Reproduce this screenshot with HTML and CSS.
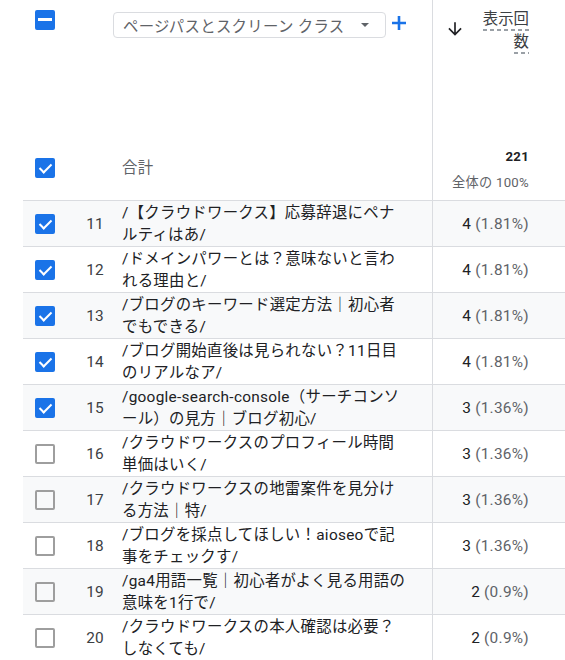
FILE: index.html
```html
<!DOCTYPE html>
<html lang="ja">

<head>
    <meta charset="utf-8">
    <link rel="stylesheet" href="styles.css">
</head>

<body>
    <div class="report">

        <div class="head">
            <div class="head-main">
                <span class="cb some"></span>
                <div class="picker">
                    <span class="picker-label">ページパスとスクリーン クラス</span>
                    <span class="caret"></span>
                </div>
                <svg class="add" width="24" height="24" viewBox="0 0 24 24">
                    <path d="M12 5v14M5 12h14" />
                </svg>
            </div>
            <div class="head-metric">
                <svg class="sort" width="20" height="20" viewBox="0 0 24 24">
                    <path d="M20 12l-1.41-1.41L13 16.17V4h-2v12.17l-5.58-5.59L4 12l8 8 8-8z" />
                </svg>
                <div class="metric-title"><span class="dashed">表示回</span><br><span class="dashed">数</span></div>
            </div>
        </div>

        <div class="row total">
            <div class="c-check"><span class="cb on"></span></div>
            <div class="c-num"></div>
            <div class="c-dim total-label">合計</div>
            <div class="c-val">
                <div class="sum">221</div>
                <div class="share">全体の 100%</div>
            </div>
        </div>

        <div class="row odd">
            <div class="c-check"><span class="cb on"></span></div>
            <div class="c-num">11</div>
            <div class="c-dim">/【クラウドワークス】応募辞退にペナ<br>ルティはあ/</div>
            <div class="c-val">4 <span class="pct">(1.81%)</span></div>
        </div>
        <div class="row">
            <div class="c-check"><span class="cb on"></span></div>
            <div class="c-num">12</div>
            <div class="c-dim">/ドメインパワーとは？意味ないと言わ<br>れる理由と/</div>
            <div class="c-val">4 <span class="pct">(1.81%)</span></div>
        </div>
        <div class="row odd">
            <div class="c-check"><span class="cb on"></span></div>
            <div class="c-num">13</div>
            <div class="c-dim">/ブログのキーワード選定方法｜初心者<br>でもできる/</div>
            <div class="c-val">4 <span class="pct">(1.81%)</span></div>
        </div>
        <div class="row">
            <div class="c-check"><span class="cb on"></span></div>
            <div class="c-num">14</div>
            <div class="c-dim">/ブログ開始直後は見られない？11日目<br>のリアルなア/</div>
            <div class="c-val">4 <span class="pct">(1.81%)</span></div>
        </div>
        <div class="row odd">
            <div class="c-check"><span class="cb on"></span></div>
            <div class="c-num">15</div>
            <div class="c-dim">/google-search-console（サーチコンソ<br>ール）の見方｜ブログ初心/</div>
            <div class="c-val">3 <span class="pct">(1.36%)</span></div>
        </div>
        <div class="row">
            <div class="c-check"><span class="cb"></span></div>
            <div class="c-num">16</div>
            <div class="c-dim">/クラウドワークスのプロフィール時間<br>単価はいく/</div>
            <div class="c-val">3 <span class="pct">(1.36%)</span></div>
        </div>
        <div class="row odd">
            <div class="c-check"><span class="cb"></span></div>
            <div class="c-num">17</div>
            <div class="c-dim">/クラウドワークスの地雷案件を見分け<br>る方法｜特/</div>
            <div class="c-val">3 <span class="pct">(1.36%)</span></div>
        </div>
        <div class="row">
            <div class="c-check"><span class="cb"></span></div>
            <div class="c-num">18</div>
            <div class="c-dim">/ブログを採点してほしい！aioseoで記<br>事をチェックす/</div>
            <div class="c-val">3 <span class="pct">(1.36%)</span></div>
        </div>
        <div class="row odd">
            <div class="c-check"><span class="cb"></span></div>
            <div class="c-num">19</div>
            <div class="c-dim">/ga4用語一覧｜初心者がよく見る用語の<br>意味を1行で/</div>
            <div class="c-val">2 <span class="pct">(0.9%)</span></div>
        </div>
        <div class="row">
            <div class="c-check"><span class="cb"></span></div>
            <div class="c-num">20</div>
            <div class="c-dim">/クラウドワークスの本人確認は必要？<br>しなくても/</div>
            <div class="c-val">2 <span class="pct">(0.9%)</span></div>
        </div>

    </div>
</body>

</html>
```

FILE: styles.css
```css
html,
body {
    margin: 0;
    padding: 0;
    background: #fff;
    overflow: hidden;
}

body {
    font-family: Roboto, "Noto Sans CJK JP", sans-serif;
    font-size: 15.4px;
    letter-spacing: 0.28px;
    color: #202124;
}

.report {
    margin-left: 23px;
    width: 542px;
}

/* header: dimension picker on the left, metric title on the right */
.head {
    display: grid;
    grid-template-columns: 1fr 133px;
    height: 146px;
}

.head-main {
    display: flex;
    align-items: flex-start;
    padding: 10px 0 0 12px;
}

.head-main .cb {
    flex: none;
}

.picker {
    box-sizing: border-box;
    width: 273px;
    height: 26px;
    margin: 2px 0 0 58px;
    border: 1px solid #dadce0;
    border-radius: 4px;
    display: flex;
    align-items: center;
    justify-content: space-between;
    padding: 0 16px 0 9px;
    color: #5f6368;
    font-size: 15.4px;
    letter-spacing: 0.3px;
}

.caret {
    width: 0;
    height: 0;
    border-left: 4px solid transparent;
    border-right: 4px solid transparent;
    border-top: 4px solid #5f6368;
}

.add {
    margin: 1px 0 0 1px;
    fill: none;
    stroke: #1a73e8;
    stroke-width: 2.6;
}

.head-metric {
    border-left: 1px solid #dadce0;
    display: flex;
    justify-content: flex-end;
    align-items: flex-start;
    padding: 8px 36px 0 0;
}

.sort {
    margin: 11px 18px 0 0;
    fill: #202124;
}

.metric-title {
    text-align: right;
    font-size: 15.4px;
    letter-spacing: 0;
    line-height: 23px;
    color: #3c4043;
}

.dashed {
    padding-bottom: 3px;
    background: linear-gradient(to right, #9aa0a6 60%, transparent 0) repeat-x left bottom / 7px 2px;
}

/* table rows */
.row {
    display: grid;
    grid-template-columns: 44px 37px 1fr 133px;
    box-sizing: border-box;
    height: 46px;
    border-top: 1px solid #dadce0;
}

.row.odd {
    background: #f8f9fa;
}

.row.total {
    height: 54px;
    border-top: 0;
}

.c-check {
    display: flex;
    align-items: center;
    padding-left: 12px;
}

.c-num {
    display: flex;
    align-items: center;
    justify-content: flex-end;
    color: #3c4043;
}

.c-dim {
    align-self: center;
    padding-left: 18px;
    line-height: 22px;
    white-space: nowrap;
}

.total .c-check,
.total .c-dim {
    padding-bottom: 10px;
}

.total-label {
    color: #5f6368;
}

.c-val {
    border-left: 1px solid #dadce0;
    display: flex;
    align-items: center;
    justify-content: flex-end;
    padding-right: 36px;
    color: #202124;
}

.pct {
    color: #5f6368;
    margin-left: 4px;
}

.total .c-val {
    flex-direction: column;
    align-items: flex-end;
    justify-content: flex-start;
}

.sum {
    font-size: 13.2px;
    font-weight: bold;
    margin-top: 3px;
}

.share {
    font-size: 13.2px;
    color: #5f6368;
    margin-top: 8px;
}

/* checkboxes */
.cb {
    position: relative;
    display: inline-block;
    box-sizing: border-box;
    width: 20px;
    height: 20px;
    border: 2px solid #9e9e9e;
    border-radius: 2px;
}

.cb.on,
.cb.some {
    background: #1a73e8;
    border-color: #1a73e8;
}

.cb.on::after {
    content: "";
    position: absolute;
    left: 5px;
    top: 1px;
    width: 5px;
    height: 10px;
    border: solid #fff;
    border-width: 0 2.5px 2.5px 0;
    transform: rotate(45deg);
}

.cb.some::after {
    content: "";
    position: absolute;
    left: 1px;
    right: 1px;
    top: 6px;
    height: 3px;
    background: #fff;
}
```
